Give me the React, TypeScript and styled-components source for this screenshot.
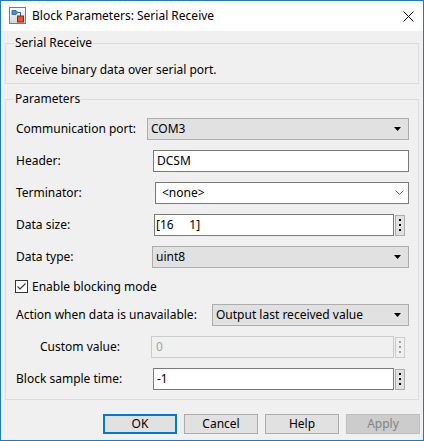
import React from "react";
import styled, { createGlobalStyle, css } from "styled-components";

const Global = createGlobalStyle`
  html, body { margin: 0; padding: 0; overflow: hidden; background: #f0f0f0; }
  * { box-sizing: border-box; }
  body { font-family: "Noto Sans", "Liberation Sans", sans-serif; font-size: 12px; color: #000; }
`;

const Window = styled.div`
  width: 424px;
  height: 441px;
  border: 1px solid #1979ca;
  display: flex;
  flex-direction: column;
  background: #f0f0f0;
`;

const TitleBar = styled.div`
  height: 30px;
  flex: none;
  background: #fff;
  display: flex;
  align-items: center;
  padding: 0 9px 1px 8px;
`;

const Title = styled.div`
  flex: 1;
  margin-left: 6px;
  font-size: 12px;
  line-height: 16px;
`;

const CloseIcon = styled.svg`
  width: 11px;
  height: 11px;
  display: block;
  margin-top: 1px;
`;

const Body = styled.div`
  flex: 1;
  padding: 4px 4px 0;
  display: flex;
  flex-direction: column;
`;

const Group = styled.fieldset<{ $bottom: number; $top?: number }>`
  margin: ${(p) => p.$top ?? 0}px 0 0;
  border: 1px solid #dcdcdc;
  padding: 11px 9px ${(p) => p.$bottom}px 9px;
  min-width: 0;
`;

const Legend = styled.legend`
  padding: 0 1px;
  margin-left: -1px;
  line-height: 16px;
  font-size: 12px;
`;

const Text = styled.div`
  line-height: 16px;
`;

const Rows = styled.div`
  display: flex;
  flex-direction: column;
  gap: 10px;
`;

const Row = styled.div<{ $labelWidth: number }>`
  display: grid;
  grid-template-columns: ${(p) => p.$labelWidth}px 1fr;
  align-items: center;
  height: 22px;
`;

const Label = styled.div<{ $indent?: number }>`
  padding-left: ${(p) => p.$indent ?? 1}px;
  line-height: 16px;
  white-space: nowrap;
`;

const controlBase = css`
  height: 22px;
  display: flex;
  align-items: center;
  line-height: 16px;
  white-space: pre;
  min-width: 0;
`;

const Select = styled.div<{ $variant: "gray" | "white" }>`
  ${controlBase}
  justify-content: space-between;
  ${(p) =>
    p.$variant === "gray"
      ? css`
          background: #e1e1e1;
          border: 1px solid #adadad;
          padding: 0 6px 0 3px;
        `
      : css`
          background: #fff;
          border: 1px solid #7a7a7a;
          padding: 0 4px 0 6px;
        `}
`;

const Input = styled.div<{ $disabled?: boolean; $pad?: number }>`
  ${controlBase}
  flex: 1;
  background: ${(p) => (p.$disabled ? "#f0f0f0" : "#fff")};
  border: 1px solid ${(p) => (p.$disabled ? "#cccccc" : "#7a7a7a")};
  color: ${(p) => (p.$disabled ? "#a0a0a0" : "#000")};
  padding: 0 3px 0 ${(p) => p.$pad ?? 3}px;
`;

const Field = styled.div`
  display: flex;
  align-items: center;
  min-width: 0;
`;

const Ellipsis = styled.div<{ $disabled?: boolean }>`
  flex: none;
  width: 10px;
  height: 21px;
  margin: 0 4px 0 1px;
  background: ${(p) => (p.$disabled ? "#f0f0f0" : "#e1e1e1")};
  border: 1px solid ${(p) => (p.$disabled ? "#cccccc" : "#adadad")};
  display: flex;
  flex-direction: column;
  align-items: center;
  justify-content: center;
  gap: 3px;
`;

const Dot = styled.span<{ $disabled?: boolean }>`
  width: 2px;
  height: 2px;
  background: ${(p) => (p.$disabled ? "#a0a0a0" : "#000")};
`;

const CheckRow = styled.label`
  display: flex;
  align-items: center;
  height: 16px;
  gap: 4px;
`;

const Box = styled.span`
  width: 13px;
  height: 13px;
  border: 1px solid #333;
  background: #fff;
  display: flex;
  align-items: center;
  justify-content: center;
`;

const ButtonBar = styled.div`
  display: flex;
  justify-content: flex-end;
  gap: 7px;
  margin-top: 14px;
  margin-right: -1px;
`;

const Button = styled.button<{ $kind?: "default" | "disabled" }>`
  width: 74px;
  height: 20px;
  font-family: inherit;
  font-size: 12px;
  line-height: 16px;
  padding: 0;
  background: #e1e1e1;
  border: 1px solid #adadad;
  color: #000;
  ${(p) =>
    p.$kind === "default" &&
    css`
      border: 2px solid #0078d7;
    `}
  ${(p) =>
    p.$kind === "disabled" &&
    css`
      background: #cccccc;
      border-color: #bfbfbf;
      color: #838383;
    `}
`;

const DropArrow = () => (
  <svg width="8" height="5" viewBox="0 0 8 5">
    <path d="M0 0 H7 L3.5 4 Z" fill="#000" />
  </svg>
);

const Chevron = () => (
  <svg width="9" height="6" viewBox="0 0 9 6">
    <path d="M0.5 0.5 L4.5 4.5 L8.5 0.5" fill="none" stroke="#606060" strokeWidth="1" />
  </svg>
);

const AppIcon = () => (
  <svg width="17" height="17" viewBox="0 0 17 17">
    <defs>
      <linearGradient id="ig" x1="0" y1="0" x2="0" y2="1">
        <stop offset="0" stopColor="#ffffff" />
        <stop offset="1" stopColor="#d4d4d4" />
      </linearGradient>
    </defs>
    <rect x="0.5" y="0.5" width="16" height="16" fill="url(#ig)" stroke="#7a7a7a" />
    <path d="M3 3.5 H7 L9 5.5 L7 7.5 H3 Z" fill="#3a8ee6" stroke="#1f5fa8" strokeWidth="0.8" />
    <path d="M9 5.5 H11.5 V9" fill="none" stroke="#2a5aa0" strokeWidth="1" />
    <rect x="8.5" y="9" width="6" height="6" fill="#e8542a" stroke="#8a2a10" strokeWidth="1" />
  </svg>
);

const Dots = ({ disabled }: { disabled?: boolean }) => (
  <Ellipsis $disabled={disabled}>
    <Dot $disabled={disabled} />
    <Dot $disabled={disabled} />
    <Dot $disabled={disabled} />
  </Ellipsis>
);

export default function App() {
  return (
    <>
      <Global />
      <Window>
        <TitleBar>
          <AppIcon />
          <Title>Block Parameters: Serial Receive</Title>
          <CloseIcon viewBox="0 0 11 11">
            <path d="M0.5 0.5 L10.5 10.5 M10.5 0.5 L0.5 10.5" stroke="#000" strokeWidth="1" />
          </CloseIcon>
        </TitleBar>
        <Body>
          <Group $bottom={5}>
            <Legend>Serial Receive</Legend>
            <Text>Receive binary data over serial port.</Text>
          </Group>
          <Group $bottom={9} $top={7}>
            <Legend>Parameters</Legend>
            <Rows>
              <Row $labelWidth={132}>
                <Label>Communication port:</Label>
                <Select $variant="gray">
                  COM3
                  <DropArrow />
                </Select>
              </Row>
              <Row $labelWidth={138}>
                <Label>Header:</Label>
                <Input>DCSM</Input>
              </Row>
              <Row $labelWidth={140}>
                <Label>Terminator:</Label>
                <Select $variant="white">
                  {"<none>"}
                  <Chevron />
                </Select>
              </Row>
              <Row $labelWidth={139}>
                <Label>Data size:</Label>
                <Field>
                  <Input $pad={1}>{"[16     1]"}</Input>
                  <Dots />
                </Field>
              </Row>
              <Row $labelWidth={137}>
                <Label>Data type:</Label>
                <Select $variant="gray">
                  uint8
                  <DropArrow />
                </Select>
              </Row>
              <CheckRow>
                <Box>
                  <svg width="11" height="11" viewBox="0 0 11 11">
                    <path d="M1.5 5.5 L4 8 L9.5 2.5" fill="none" stroke="#333" strokeWidth="1.1" />
                  </svg>
                </Box>
                Enable blocking mode
              </CheckRow>
              <Row $labelWidth={197}>
                <Label>Action when data is unavailable:</Label>
                <Select $variant="gray">
                  Output last received value
                  <DropArrow />
                </Select>
              </Row>
              <Row $labelWidth={136}>
                <Label $indent={25}>Custom value:</Label>
                <Field>
                  <Input $disabled $pad={4}>0</Input>
                  <Dots disabled />
                </Field>
              </Row>
              <Row $labelWidth={138}>
                <Label>Block sample time:</Label>
                <Field>
                  <Input>-1</Input>
                  <Dots />
                </Field>
              </Row>
            </Rows>
          </Group>
          <ButtonBar>
            <Button $kind="default">OK</Button>
            <Button>Cancel</Button>
            <Button>Help</Button>
            <Button $kind="disabled">Apply</Button>
          </ButtonBar>
        </Body>
      </Window>
    </>
  );
}
